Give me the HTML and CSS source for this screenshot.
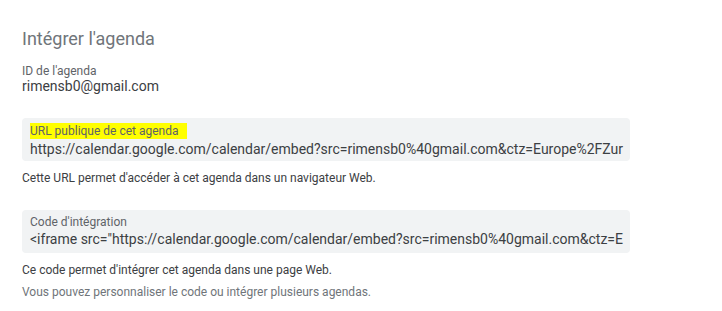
FILE: index.html
```html
<!DOCTYPE html>
<html lang="fr">
<head>
<meta charset="utf-8">
<link rel="stylesheet" href="styles.css">
</head>
<body>
<main class="page">
  <h2 class="title">Intégrer l'agenda</h2>
  <div class="field">
    <div class="label">ID de l'agenda</div>
    <div class="value">rimensb0@gmail.com</div>
  </div>
  <div class="box box-url">
    <div class="box-label"><span class="hl">URL publique de cet agenda</span></div>
    <div class="box-value">https://calendar.google.com/calendar/embed?src=rimensb0%40gmail.com&amp;ctz=Europe%2FZur</div>
  </div>
  <p class="help">Cette URL permet d'accéder à cet agenda dans un navigateur Web.</p>
  <div class="box box-code">
    <div class="box-label">Code d'intégration</div>
    <div class="box-value">&lt;iframe src="https://calendar.google.com/calendar/embed?src=rimensb0%40gmail.com&amp;ctz=E</div>
  </div>
  <p class="help">Ce code permet d'intégrer cet agenda dans une page Web.</p>
  <p class="help muted">Vous pouvez personnaliser le code ou intégrer plusieurs agendas.</p>
</main>
</body>
</html>
```
FILE: styles.css
```css
html, body { margin: 0; padding: 0; background: #fff; }
body { font-family: Roboto, "Noto Sans", Arial, sans-serif; color: #3c4043; }
.page { width: 608px; padding: 27px 0 0 22px; }
.title { margin: 0; font-weight: 400; font-size: 18px; line-height: 24px; color: #70757a; }
.field { margin-top: 13px; }
.label { font-size: 12px; line-height: 14px; color: #5f6368; }
.value { font-size: 14px; line-height: 16px; color: #3c4043; }
.box { background: #f1f3f4; border-radius: 4px; padding: 5px 8px 5px 8px; margin-top: 24px; height: 33px; }
.box-label { font-size: 12px; line-height: 14px; color: #5f6368; }
.hl { background: #ffff00; padding: 1px 8px 1px 0; display: inline-block; }
.box-value { font-size: 14px; line-height: 20px; white-space: nowrap; color: #3c4043; }
.help { margin: 10px 0 0; font-size: 12px; line-height: 14px; color: #3c4043; }
.muted { margin-top: 8px; color: #70757a; }
.box-code { margin-top: 25px; }
```
